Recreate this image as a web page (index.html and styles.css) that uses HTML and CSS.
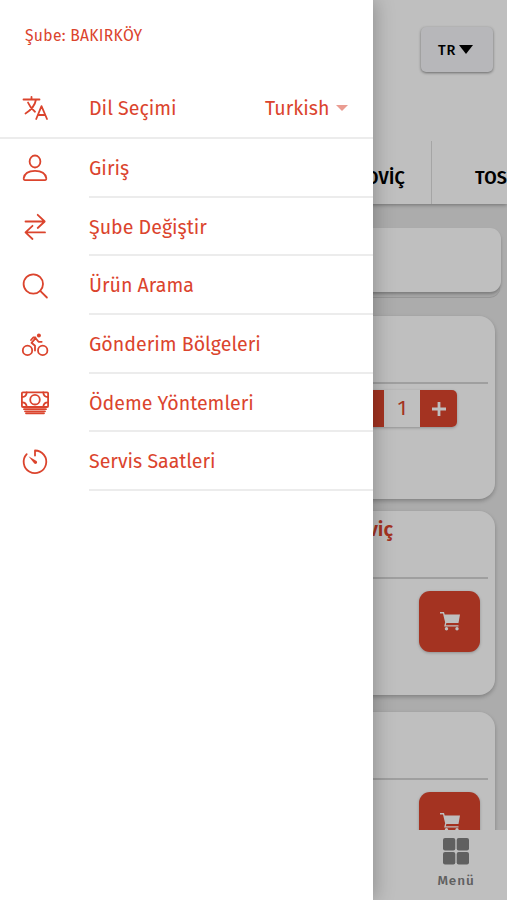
FILE: index.html
```
<!DOCTYPE html>
<html lang="tr">
<head>
    <meta charset="UTF-8">
    <meta name="viewport" content="width=device-width, initial-scale=1.0">
    <title>Menü</title>
    <link rel="stylesheet" href="styles.css">
</head>
<body>

    <!-- Shop page -->
    <div class="app">
        <header class="header">
            <button class="lang-button">TR <span class="caret"></span></button>
            <div class="tabs">
                <div class="tab tab-first">OVİÇ</div>
                <div class="tab tab-next">TOS</div>
            </div>
        </header>

        <main class="content">
            <div class="search-card"></div>

            <div class="card">
                <div class="card-title"></div>
                <div class="quantity">
                    <button class="minus"></button>
                    <span class="count">1</span>
                    <button class="plus">
                        <svg width="14" height="14" viewBox="0 0 14 14"><path d="M7 0v14M0 7h14" stroke="#fff" stroke-width="2.8"/></svg>
                    </button>
                </div>
            </div>

            <div class="card">
                <div class="card-title">viç</div>
                <button class="cart">
                    <svg width="20" height="19" viewBox="0 0 20 19"><path d="M0 0h4l.7 2.500H20l-1.500 8.500H5.300L3 1.400H0z" fill="#fff"/><path d="M5.800 10.500L5 13.800h13.500" fill="none" stroke="#fff" stroke-width="1.300"/><circle cx="6.500" cy="16.800" r="1.700" fill="#fff"/><circle cx="17" cy="16.800" r="1.700" fill="#fff"/></svg>
                </button>
            </div>

            <div class="card">
                <div class="card-title"></div>
                <button class="cart">
                    <svg width="20" height="19" viewBox="0 0 20 19"><path d="M0 0h4l.7 2.500H20l-1.500 8.500H5.300L3 1.400H0z" fill="#fff"/><path d="M5.800 10.500L5 13.800h13.500" fill="none" stroke="#fff" stroke-width="1.300"/><circle cx="6.500" cy="16.800" r="1.700" fill="#fff"/><circle cx="17" cy="16.800" r="1.700" fill="#fff"/></svg>
                </button>
            </div>
        </main>

        <footer class="bottom-bar">
            <div class="bottom-item">
                <svg width="26" height="27" viewBox="0 0 26 27" fill="#808080"><rect width="12.300" height="12.500" rx="2"/><rect x="13.700" width="12.300" height="12.500" rx="2"/><rect y="14" width="12.300" height="12.500" rx="2"/><rect x="13.700" y="14" width="12.300" height="12.500" rx="2"/></svg>
                <span>Menü</span>
            </div>
        </footer>
    </div>

    <!-- Dark layer behind the menu -->
    <div class="backdrop"></div>

    <!-- Side menu -->
    <nav class="drawer">
        <div class="branch">Şube: BAKIRKÖY</div>

        <div class="language">
            <svg class="icon" viewBox="0 0 28 28"><path d="M2.500 5.500h16M10.500 2.800v2.700M7 8.500c1.500 4 4.500 7 7 9.200M15 5.500C14 11.500 10 16 4.500 19.500M15.200 25l5.300-12.800L26 25M16.800 21h7.500"/></svg>
            <span class="label">Dil Seçimi</span>
            <span class="value">Turkish</span>
            <span class="caret-small"></span>
        </div>

        <ul class="menu">
            <li>
                <svg class="icon" viewBox="0 0 28 28"><ellipse cx="14" cy="7.500" rx="5.400" ry="6"/><path d="M2.700 24.200C3.500 19.300 8 16.900 14 16.900s10.500 2.400 11.300 7.300c.2 1-.3 1.900-1.400 1.900H4.100c-1.100 0-1.600-.9-1.400-1.900z"/></svg>
                <span class="label">Giriş</span>
            </li>
            <li>
                <svg class="icon" viewBox="0 0 28 28"><path d="M16.700 1.800l7 6.700-7 6.500M23.500 8.500h-19M11.500 12.800l-7 6.600 7 6.600M4.700 19.400H24"/></svg>
                <span class="label">Şube Değiştir</span>
            </li>
            <li>
                <svg class="icon" viewBox="0 0 28 28"><circle cx="12.300" cy="12" r="9.700"/><path d="M19.200 18.900l6.700 6.600"/></svg>
                <span class="label">Ürün Arama</span>
            </li>
            <li>
                <svg class="icon" viewBox="0 0 28 28"><circle cx="6.500" cy="20.400" r="4.700"/><circle cx="21.700" cy="20.400" r="4.700"/><circle cx="17.900" cy="5.400" r="2" fill="#db442d" stroke="none"/><path d="M14 20.500v-4.700l-3.500-3 4.200-4.600 2.800 3.600h3.200M10 10l2.200-2.500h2.300"/></svg>
                <span class="label">Gönderim Bölgeleri</span>
            </li>
            <li>
                <svg class="icon" viewBox="0 0 28 28"><rect x=".9" y="3.300" width="26.200" height="14.700" rx="1"/><circle cx="14" cy="10.700" r="4.800"/><path d="M1 8c3 0 4.500-1.500 4.700-4.500M27 8c-3 0-4.500-1.500-4.700-4.500M1 13.300c3 0 4.500 1.500 4.700 4.500M27 13.300c-3 0-4.500 1.500-4.700 4.500M3 20.200h22M4 22.300h20M5 24.300h18"/></svg>
                <span class="label">Ödeme Yöntemleri</span>
            </li>
            <li>
                <svg class="icon" viewBox="0 0 28 28"><path d="M14 7.500V2.500A11.300 11.300 0 1 1 5.700 6.100"/><path d="M7.500 8.300l8 4.700c1.600 1.400-.5 4-2.200 2.500z" fill="#db442d" stroke="none"/></svg>
                <span class="label">Servis Saatleri</span>
            </li>
        </ul>
    </nav>

</body>
</html>
```
FILE: styles.css
```
* {
    box-sizing: border-box;
}

body {
    margin: 0;
    height: 900px;
    overflow: hidden;
    position: relative;
    font-family: "Fira Sans", "Noto Sans", sans-serif;
    background-color: #e6e6e6;
}

button {
    border: 0;
    padding: 0;
    font-family: inherit;
}

/* Shop page */
.app {
    height: 900px;
    display: flex;
    flex-direction: column;
}

.header {
    height: 204px;
    flex: none;
    display: flex;
    flex-direction: column;
    justify-content: space-between;
    align-items: flex-end;
    padding-top: 27px;
    background-color: #fff;
    box-shadow: 0 1px 4px rgba(0, 0, 0, 0.35);
}

.lang-button {
    width: 72px;
    height: 45px;
    margin-right: 14px;
    padding-right: 3px;
    display: flex;
    align-items: center;
    justify-content: center;
    gap: 3px;
    border-radius: 5px;
    background-color: #f4f5f8;
    box-shadow: 0 1px 3px rgba(0, 0, 0, 0.45);
    color: #000;
    font-size: 14.5px;
    font-weight: 500;
    letter-spacing: 0.8px;
}

.caret {
    border: 7px solid transparent;
    border-top: 9px solid #000;
    border-bottom: 0;
}

.tabs {
    width: 507px;
    height: 63px;
    display: flex;
    overflow: hidden;
    font-size: 18px;
    font-weight: 600;
    line-height: 74px;
    letter-spacing: 0.2px;
}

.tab {
    flex: none;
}

.tab-first {
    width: 432px;
    padding-right: 26px;
    text-align: right;
    border-right: 1px solid #ddd;
}

.tab-next {
    padding-left: 43px;
}

.content {
    flex: 1;
    min-height: 0;
    overflow: hidden;
    padding: 24px 12px 0 6px;
}

.search-card {
    height: 64px;
    margin-right: -6px;
    margin-bottom: 24px;
    border-radius: 11px;
    background-color: #fff;
    box-shadow: 0 2px 3px rgba(0, 0, 0, 0.25), 0 6px 0 -1px #dedede, 0 7px 0 -1px #c8c8c8;
}

.card {
    height: 183px;
    margin-bottom: 12px;
    padding: 0 7px;
    border-radius: 16px;
    background-color: #fff;
    box-shadow: 0 2px 4px rgba(0, 0, 0, 0.25);
}

.card + .card {
    height: 184px;
    margin-bottom: 17px;
}

.card-title {
    height: 68px;
    padding: 5px 95px 0 0;
    border-bottom: 2px solid #d4d4d4;
    color: #db442d;
    font-size: 20px;
    font-weight: 600;
    line-height: 26px;
    text-align: right;
}

.quantity {
    width: 110px;
    height: 37px;
    margin: 6px 31px 0 auto;
    display: flex;
    border-radius: 5px;
    overflow: hidden;
    box-shadow: 0 1px 3px rgba(0, 0, 0, 0.25);
}

.minus,
.plus {
    width: 37px;
    display: flex;
    align-items: center;
    justify-content: center;
    background-color: #db442d;
}

.count {
    flex: 1;
    color: #db442d;
    font-size: 21px;
    line-height: 37px;
    text-align: center;
}

.cart {
    width: 61px;
    height: 61px;
    margin: 12px 8px 0 auto;
    display: flex;
    align-items: center;
    justify-content: center;
    border-radius: 11px;
    background-color: #db442d;
    box-shadow: 0 1px 3px rgba(0, 0, 0, 0.25);
}

.bottom-bar {
    height: 70px;
    flex: none;
    display: flex;
    justify-content: flex-end;
    padding: 8px 21px 0 0;
    background-color: #fff;
}

.bottom-item {
    width: 60px;
    display: flex;
    flex-direction: column;
    align-items: center;
    gap: 5px;
    color: #808080;
    font-size: 13.5px;
    font-weight: 500;
    line-height: 21px;
    letter-spacing: 0.9px;
}

/* Dark layer over the page */
.backdrop {
    position: absolute;
    inset: 0;
    background-color: rgba(0, 0, 0, 0.25);
}

/* Side menu */
.drawer {
    position: absolute;
    top: 0;
    left: 0;
    width: 372.5px;
    height: 900px;
    background-color: #fff;
    box-shadow: 2px 0 18px rgba(0, 0, 0, 0.25);
    color: #db442d;
    font-size: 19.6px;
}

.branch {
    height: 79px;
    padding: 24px 0 0 25px;
    font-size: 15.7px;
    line-height: 24px;
    letter-spacing: 0.3px;
}

.language {
    height: 60px;
    display: flex;
    align-items: center;
    padding: 0 25px 0 21px;
    border-bottom: 2px solid #ececec;
}

.icon {
    width: 28px;
    height: 28px;
    flex: none;
    margin-right: 40px;
    fill: none;
    stroke: #db442d;
    stroke-width: 1.8;
    stroke-linecap: round;
    stroke-linejoin: round;
}

.label {
    white-space: nowrap;
}

.value {
    margin-left: auto;
}

.caret-small {
    margin-left: 6px;
    border: 6px solid transparent;
    border-top: 6px solid #ea9c91;
    border-bottom: 0;
}

.menu {
    list-style-type: none;
    margin: 0;
    padding: 0 0 0 21px;
}

.menu li {
    height: 58.65px;
    display: flex;
    align-items: center;
}

.menu .label {
    flex: 1;
    height: 100%;
    line-height: 59px;
    border-bottom: 2px solid #ececec;
}
```
